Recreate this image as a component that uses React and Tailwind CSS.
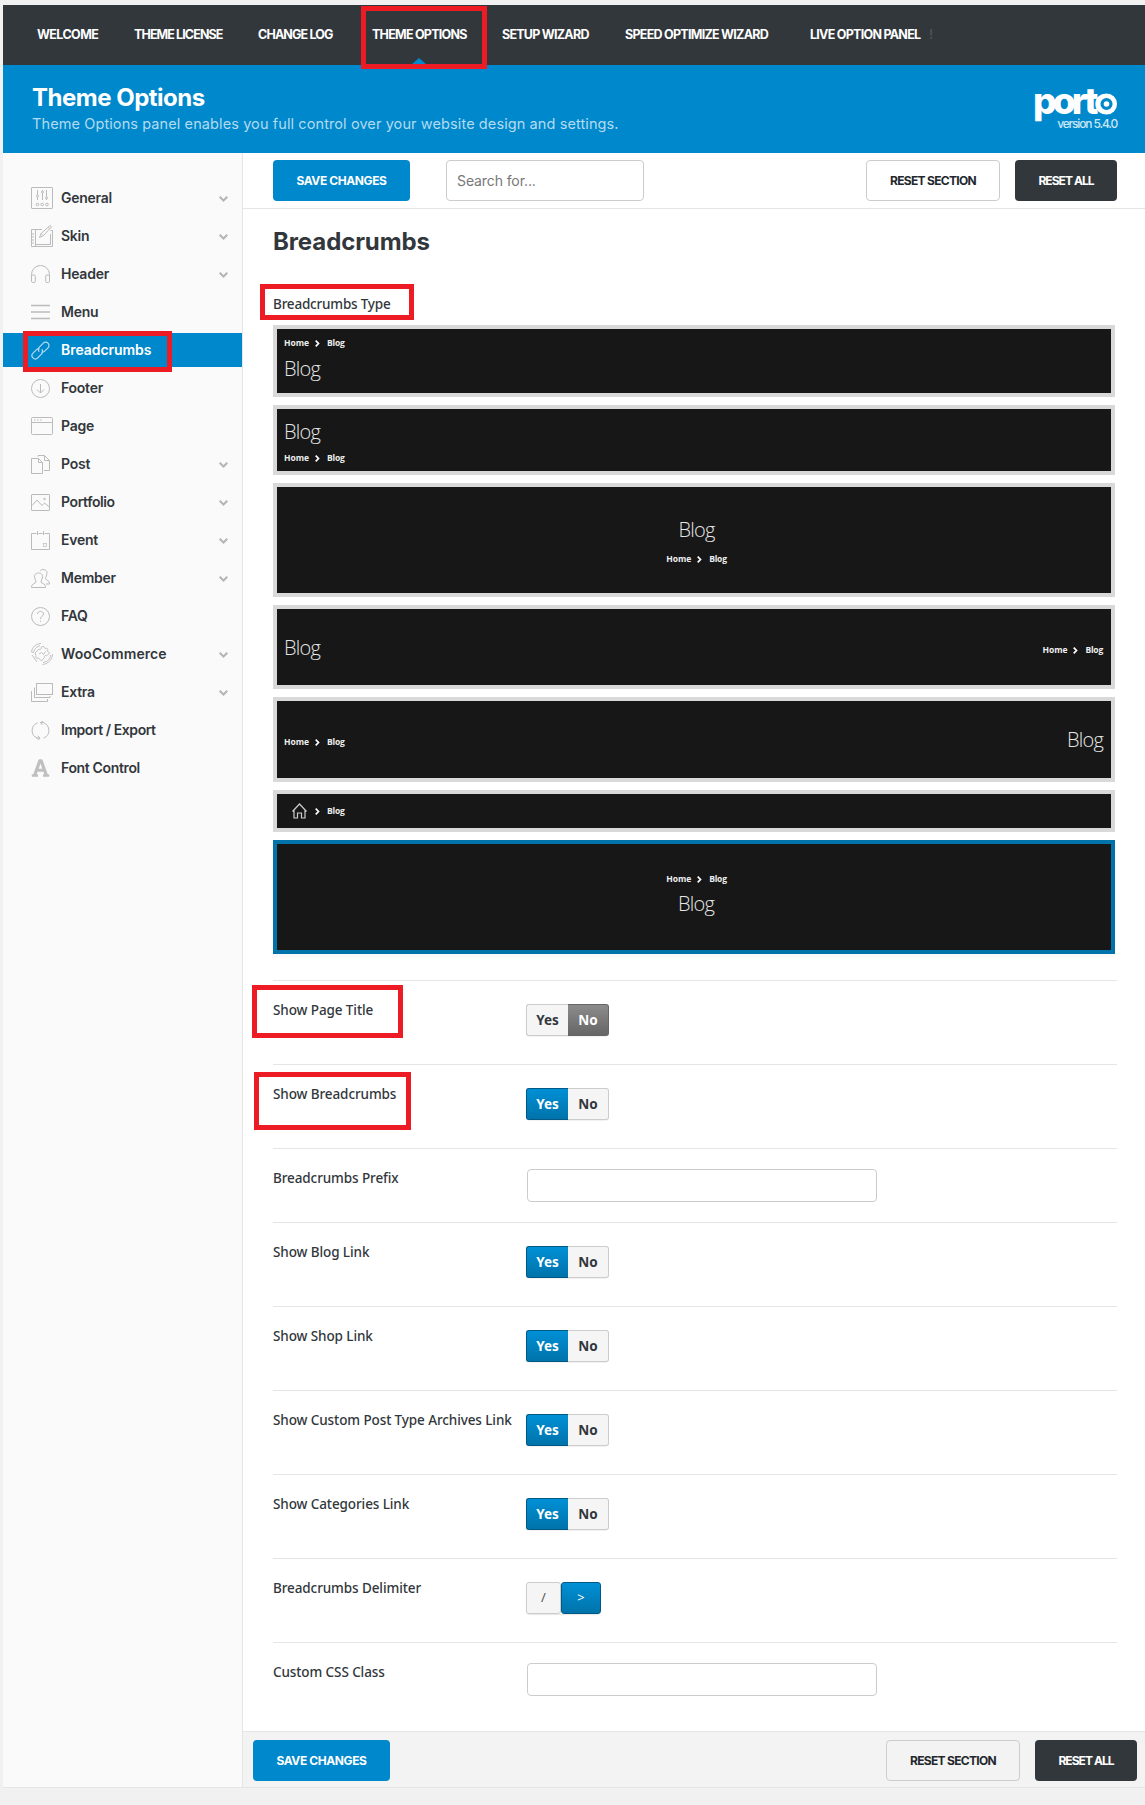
import { useState } from "react";
import { FaFont } from "react-icons/fa";
import clsx from "clsx";

const NAV = [
    { label: "WELCOME", className: "w-[62px] tracking-[-0.6px]" },
    { label: "THEME LICENSE", className: "w-[89px] tracking-[-0.9px]" },
    { label: "CHANGE LOG", className: "w-[79px] tracking-[-0.85px]" },
    { label: "THEME OPTIONS", className: "w-[95px] tracking-[-0.75px]", active: true },
    { label: "SETUP WIZARD", className: "w-[88px] tracking-[-0.75px]" },
    { label: "SPEED OPTIMIZE WIZARD", className: "w-[150px] tracking-[-0.73px]" },
    { label: "LIVE OPTION PANEL", className: "w-[112px] tracking-[-0.73px]" },
];

const ICONS = {
    general: (
        <svg width="22" height="22" viewBox="0 0 22 22">
            <rect x="0.5" y="0.5" width="21" height="21" rx="0.5" />
            <path d="M6.5 3v5M6.5 10v3M11.5 3v1M11.5 6v7M15.5 3v7M15.5 12v1" />
            <circle cx="6.5" cy="9" r="1" />
            <circle cx="11.5" cy="5" r="1" />
            <circle cx="15.5" cy="11" r="1" />
            <circle cx="6.5" cy="17.5" r="1.3" />
            <circle cx="11.2" cy="17.5" r="1.3" />
            <circle cx="16" cy="17.5" r="1.3" />
        </svg>
    ),
    skin: (
        <svg width="22" height="22" viewBox="0 0 22 22">
            <path d="M11 4.5H0.5v17h21V5.5h-2M4.5 4.5v17M1 9h2M1 12h2M1 15h2M1 18h2M5 19.5h14.5V9" />
            <path d="M8.5 12.5l1.5-4 8.5-7.5q1.5-.8 2 .8l-8 8.7zM10 8.5l2 2M17 2l2 2" />
        </svg>
    ),
    header: (
        <svg width="19" height="19" viewBox="0 0 19 19">
            <path d="M0.5 14V9.5a9 9 0 0 1 18 0V14" />
            <rect x="0.5" y="10" width="3.8" height="7.5" rx="1.2" />
            <rect x="14.7" y="10" width="3.8" height="7.5" rx="1.2" />
        </svg>
    ),
    menu: (
        <svg width="19" height="19" viewBox="0 0 19 19" className="stroke-[1.3]">
            <path d="M0 2.5h19M0 9h19M0 15.5h19" />
        </svg>
    ),
    breadcrumbs: (
        <svg width="19" height="19" viewBox="0 0 19 19" className="stroke-[1.2]">
            <path d="M8.3 10.7a3.2 3.2 0 0 1 0-4.6l4-4a3.3 3.3 0 0 1 4.7 4.7l-3.6 3.6q-1.4 1.2-3 .8M10.7 8.3a3.2 3.2 0 0 1 0 4.6l-4 4A3.3 3.3 0 0 1 2 12.2l3.6-3.6q1.4-1.2 3-.8" />
        </svg>
    ),
    footer: (
        <svg width="19" height="19" viewBox="0 0 19 19">
            <circle cx="9.5" cy="9.5" r="9" />
            <path d="M9.5 5v9M6 10.5l3.5 3.5 3.5-3.5" />
        </svg>
    ),
    page: (
        <svg width="22" height="18" viewBox="0 0 22 18">
            <rect x="0.5" y="0.5" width="21" height="17" rx="1" />
            <path d="M0.5 5.5h21M3 3h1.5M6 3h1.5M9 3h1.5" />
        </svg>
    ),
    post: (
        <svg width="19" height="19" viewBox="0 0 19 19">
            <path d="M0.5 3.5h7l4 4v11h-11zM7.5 3.5v4h4" />
            <path d="M7 1.5V.5h6.5l5 5v10H13M13.5 .5v5h5" />
        </svg>
    ),
    portfolio: (
        <svg width="19" height="17" viewBox="0 0 19 17">
            <rect x="0.5" y="0.5" width="18" height="16" rx="0.5" />
            <path d="M1 11.5l5-5.5 5 5.5 2.5-2.5 5 4" />
            <circle cx="13.5" cy="5" r="0.8" />
        </svg>
    ),
    event: (
        <svg width="19" height="19" viewBox="0 0 19 19">
            <path d="M5.5 2.5H.5v16h18v-16h-5M7.5 2.5h4M6.5 0v4M12.5 0v4" />
            <rect x="12.5" y="12.5" width="3" height="3" className="stroke-[0.7]" />
        </svg>
    ),
    member: (
        <svg width="19" height="19" viewBox="0 0 19 19">
            <path d="M7.5 4c-3.5 0-4.5 2.5-3.8 5 .3 1.6 1.3 2.7 1.3 4 0 1.5-4.5 1.5-4.5 4.5v1h14v-1c0-3-4.5-3-4.5-4.5 0-1.300 1-2.400 1.300-4C12 6.500 11 4 7.500 4z" />
            <path d="M9 2C10 .8 11 .5 12 .5c3.500 0 4.500 2.500 3.800 5-.3 1.600-1.300 2.700-1.300 4 0 1.700 4 1.500 4 5v.5H15" />
        </svg>
    ),
    faq: (
        <svg width="19" height="19" viewBox="0 0 19 19">
            <circle cx="9.5" cy="9.5" r="9" />
            <path d="M6.5 7c0-3.500 6-3.500 6 0 0 2-3 2.300-3 5M9.500 13.500v1.200" />
        </svg>
    ),
    woo: (
        <svg width="22" height="22" viewBox="0 0 22 22" className="stroke-[0.9]">
            <path d="M.5 9C1 4.500 5 .5 10 .5M2.500 9.500c.5-3 3-6 6.500-7M.5 9l2 .5M21.500 11c0 5-4 10-10 10.500M19.500 12c0 3.500-3 7-7.500 7.500M1 12l5 7" />
            <path d="M4 10l4-4c1 1 2.500.5 2-1.500l2-1.500 2 2.500c2-1 3.500.5 2.500 2.500l2 2-3 3c-1-1-2.500-.5-2 1.500l-3 3.500-3-3c-2 1-3.500-.5-2.500-2.500z" />
            <path d="M8 11l2.500-1.500 2 2 2-3" />
        </svg>
    ),
    extra: (
        <svg width="22" height="19" viewBox="0 0 22 19">
            <rect x="5.5" y="0.5" width="16" height="11" />
            <path d="M3.5 4.5v10H19V13M.5 8v10.500h16V16" />
        </svg>
    ),
    importExport: (
        <svg width="19" height="19" viewBox="0 0 19 19">
            <path d="M6.500 1.800a8.200 8.200 0 0 0 0 15.400M12.500 17.200a8.200 8.200 0 0 0 0-15.400M9.500 1.500h3.300M12 0L9.500 1.600 11.500 4M9 17H5.500M7 14.800L9 17.300 6.500 19" />
        </svg>
    ),
    font: <FaFont className="h-5 w-[19px] fill-[#bfbfbf] stroke-none" />,
};

const MENU = [
    { label: "General", icon: "general", sub: true },
    { label: "Skin", icon: "skin", sub: true },
    { label: "Header", icon: "header", sub: true },
    { label: "Menu", icon: "menu" },
    { label: "Breadcrumbs", icon: "breadcrumbs", active: true, tracking: "tracking-[-0.05px]" },
    { label: "Footer", icon: "footer" },
    { label: "Page", icon: "page" },
    { label: "Post", icon: "post", sub: true },
    { label: "Portfolio", icon: "portfolio", sub: true, tracking: "tracking-[-0.4px]" },
    { label: "Event", icon: "event", sub: true },
    { label: "Member", icon: "member", sub: true },
    { label: "FAQ", icon: "faq" },
    { label: "WooCommerce", icon: "woo", sub: true, tracking: "tracking-[0.1px]" },
    { label: "Extra", icon: "extra", sub: true },
    { label: "Import / Export", icon: "importExport", tracking: "tracking-[-0.45px]" },
    { label: "Font Control", icon: "font", tracking: "tracking-[-0.35px]" },
];

// Red frame laid over a part of the page
function Highlight({ className }) {
    return <div className={clsx("absolute border-[5px] border-[#ed1c24] pointer-events-none z-10", className)} />;
}

function TopNav() {
    return (
        <nav className="h-[60px] bg-[#32373c] flex items-center pl-[34px] gap-[35px] text-white text-[12.5px] font-bold whitespace-nowrap">
            {NAV.map((item) => (
                <a key={item.label} className={clsx("relative h-full flex items-center", item.className)}>
                    {item.label}
                    {item.active && (
                        <span className="absolute bottom-0 left-[39px] border-x-8 border-b-[7px] border-x-transparent border-b-[#0088cc]" />
                    )}
                </a>
            ))}
            <span className="-ml-[28px] text-[#4a5056]">!</span>
        </nav>
    );
}

function Header() {
    return (
        <header className="h-[88px] bg-[#0088cc] flex justify-between pl-[29px] pr-7 text-white whitespace-nowrap">
            <div className="pt-4">
                <h1 className="text-[24px] leading-[34px] font-bold tracking-[-0.5px]">Theme Options</h1>
                <p className="-mt-px text-[14.5px] leading-5 text-[#b3dbf0] tracking-[0.1px]">
                    Theme Options panel enables you full control over your website design and settings.
                </p>
            </div>
            <div className="w-[82px] pt-[19px]">
                <svg width="84" height="40" viewBox="0 0 84 40" className="block overflow-visible fill-white">
                    <text x="-2" y="30" textLength="84" lengthAdjust="spacing" className="text-[37px] font-extrabold">porto</text>
                    {/* target ring over the last letter */}
                    <circle cx="71.5" cy="20" r="8.3" strokeWidth="4.5" className="fill-[#0088cc] stroke-white" />
                    <circle cx="71.5" cy="20" r="2.8" />
                </svg>
                <div className="-mt-[8px] text-right text-[12px] leading-[16px] font-medium text-[#cce7f5] tracking-[-1.15px]">version 5.4.0</div>
            </div>
        </header>
    );
}

function Sidebar() {
    return (
        <aside className="w-[240px] bg-[#fafafa] border-r border-[#e5e5e5] pt-7 flex flex-col gap-1">
            {MENU.map((item) => (
                <a
                    key={item.label}
                    className={clsx(
                        "h-[34px] flex items-center pl-7 pr-[14px] text-[14px] font-semibold whitespace-nowrap",
                        item.tracking || "tracking-[-0.25px]",
                        item.active ? "bg-[#0088cc] text-white" : "text-[#32373c]"
                    )}
                >
                    <span className={clsx("w-[30px] shrink-0 [&>svg]:block", item.active ? "fill-none stroke-[#b3dbf0]" : "fill-none stroke-[#bbb]")}>
                        {ICONS[item.icon]}
                    </span>
                    <span className="-mt-[2px]">{item.label}</span>
                    {item.sub && (
                        <svg width="9" height="6" viewBox="0 0 9 6" className="ml-auto mt-[2px] fill-none stroke-[#b5b5b5] stroke-2">
                            <path d="M0.7 0.7l3.8 3.8 3.8-3.8" />
                        </svg>
                    )}
                </a>
            ))}
        </aside>
    );
}

function Button({ variant, className, children }) {
    return (
        <button
            className={clsx(
                "h-[41px] rounded text-[12px] font-bold whitespace-nowrap",
                variant === "primary" && "w-[137px] bg-[#0088cc] text-white tracking-[-0.4px]",
                variant === "outline" && "w-[134px] border border-[#ccc] text-[#23282d] tracking-[-0.7px]",
                variant === "dark" && "w-[102px] bg-[#32373c] text-white tracking-[-0.95px]",
                className
            )}
        >
            {children}
        </button>
    );
}

function Crumbs({ home = false, className }) {
    return (
        <div className={clsx("flex items-center text-[8.5px] leading-[10px] font-bold text-[#eee]", className)}>
            {home ? (
                <svg width="15" height="16" viewBox="0 0 15 16" className="ml-2 mr-2 fill-none stroke-[#ccc] stroke-[1.2]">
                    <path d="M0.5 8.5l7-7.5 7 7.5M2 7.5v7.5h3.5v-5h4v5H13V7.5" />
                </svg>
            ) : (
                <span className="w-[31px]">Home</span>
            )}
            <svg width="5" height="7" viewBox="0 0 5 7" className="mr-[7px] fill-none stroke-white stroke-[1.7]">
                <path d="M0.7 0.7l2.8 2.8-2.8 2.8" />
            </svg>
            <span className="tracking-[-0.2px]">Blog</span>
        </div>
    );
}

function BlogTitle({ className }) {
    return <div className={clsx("text-[20px] leading-6 font-light tracking-[-0.8px] text-[#e5e5e5]", className)}>Blog</div>;
}

function TypeOption({ selected, className, children }) {
    return (
        <div className={clsx("w-[842px] border-4 bg-[#171717] flex font-['Open_Sans',sans-serif]", selected ? "border-[#0073aa]" : "border-[#d9d9d9]", className)}>
            {children}
        </div>
    );
}

function BreadcrumbTypes() {
    return (
        <div className="flex flex-col gap-2">
            <TypeOption className="h-[72px] flex-col pl-[7px] pt-[9px]">
                <Crumbs />
                <BlogTitle className="mt-[9px]" />
            </TypeOption>
            <TypeOption className="h-[70px] flex-col pl-[7px] pt-[11px]">
                <BlogTitle />
                <Crumbs className="mt-[9px]" />
            </TypeOption>
            <TypeOption className="h-[114px] flex-col items-center pt-[31px]">
                <BlogTitle className="ml-[5px]" />
                <Crumbs className="mt-3 ml-[5px]" />
            </TypeOption>
            <TypeOption className="h-[84px] items-center justify-between pl-[7px] pr-2">
                <BlogTitle className="mt-px" />
                <Crumbs className="mt-[6px]" />
            </TypeOption>
            <TypeOption className="h-[85px] items-center justify-between pl-[7px] pr-2">
                <Crumbs className="mt-[5px]" />
                <BlogTitle />
            </TypeOption>
            <TypeOption className="h-[42px] items-center pl-[7px]">
                <Crumbs home />
            </TypeOption>
            <TypeOption selected className="h-[114px] flex-col items-center pt-[30px]">
                <Crumbs className="ml-[5px]" />
                <BlogTitle className="mt-[8px] ml-[4px]" />
            </TypeOption>
        </div>
    );
}

function Switch({ defaultValue }) {
    const [on, setOn] = useState(defaultValue);
    return (
        <div className="h-8 flex text-[13.5px] font-bold leading-[30px] text-center shadow-[0_1px_1px_rgba(0,0,0,0.06)] rounded">
            <button
                onClick={() => setOn(true)}
                className={clsx(
                    "w-[42px] rounded-l-[3px] border",
                    on ? "border-[#005885] border-r-0 bg-linear-to-b from-[#0090d6] to-[#0073aa] text-white" : "border-[#ccc] border-r-0 bg-[#f5f5f5] text-[#32373c]"
                )}
            >
                Yes
            </button>
            <button
                onClick={() => setOn(false)}
                className={clsx(
                    "w-[41px] rounded-r-[3px] border border-l-0",
                    on ? "border-[#ccc] bg-[#f5f5f5] text-[#32373c]" : "border-[#666] bg-linear-to-b from-[#8c8c8c] to-[#666] text-white"
                )}
            >
                No
            </button>
        </div>
    );
}

function Field({ label, className = "h-[84px] pt-[23px]", labelClass = "-mt-px", children }) {
    return (
        <div className={clsx("w-[844px] border-t border-[#e5e5e5] flex items-start", className)}>
            <label className={clsx("w-[253px] shrink-0 text-[13.5px] leading-[14px] text-[#32373c] font-medium tracking-[-0.1px] whitespace-nowrap", labelClass)}>{label}</label>
            {children}
        </div>
    );
}

export default function App() {
    return (
        <div className="relative w-[1145px] h-[1805px] overflow-hidden bg-[#f1f1f1] pt-[5px] pl-[3px] font-['Inter',sans-serif]">
            <TopNav />
            <Header />
            <div className="flex h-[1635px] border-b border-[#e5e5e5]">
                <Sidebar />
                <main className="flex-1 bg-white flex flex-col">
                    <div className="h-14 shrink-0 border-b border-[#e5e5e5] flex items-start pt-[7px] pl-[30px] pr-7">
                        <Button variant="primary">SAVE CHANGES</Button>
                        <input
                            placeholder="Search for..."
                            className="ml-9 w-[198px] h-[41px] border border-[#ccc] rounded px-[10px] text-[14px] tracking-[-0.1px] placeholder:text-[#777] outline-none"
                        />
                        <Button variant="outline" className="ml-auto">RESET SECTION</Button>
                        <Button variant="dark" className="ml-[15px]">RESET ALL</Button>
                    </div>

                    <div className="flex-1 pl-[30px]">
                        <h2 className="pt-[17px] text-[24px] leading-8 font-bold tracking-[-0.1px] text-[#32373c]">Breadcrumbs</h2>

                        <div className="font-['Noto_Sans',sans-serif]">
                            <div className="mt-[37px] mb-[12px] text-[13.5px] leading-[18px] font-medium tracking-[-0.2px] text-[#32373c]">Breadcrumbs Type</div>
                            <BreadcrumbTypes />
                            <div className="w-[842px] h-1 bg-[#fafafa] mb-[22px]" />

                            <Field label="Show Page Title"><Switch defaultValue={false} /></Field>
                            <Field label="Show Breadcrumbs"><Switch defaultValue /></Field>
                            <Field label="Breadcrumbs Prefix" className="h-[74px] pt-5" labelClass="mt-[2px]">
                                <input className="ml-[1px] w-[350px] h-[33px] border border-[#ccc] rounded px-2 outline-none" />
                            </Field>
                            <Field label="Show Blog Link"><Switch defaultValue /></Field>
                            <Field label="Show Shop Link"><Switch defaultValue /></Field>
                            <Field label="Show Custom Post Type Archives Link"><Switch defaultValue /></Field>
                            <Field label="Show Categories Link"><Switch defaultValue /></Field>
                            <Field label="Breadcrumbs Delimiter">
                                <div className="flex h-8 text-[13px] text-center shadow-[0_1px_1px_rgba(0,0,0,0.1)] rounded">
                                    <button className="w-[35px] rounded-[3px] border border-[#ccc] bg-[#f5f5f5] text-[#555]">/</button>
                                    <button className="w-10 rounded-[3px] border border-[#005885] bg-linear-to-b from-[#0090d6] to-[#0073aa] text-white">&gt;</button>
                                </div>
                            </Field>
                            <Field label="Custom CSS Class" className="h-[84px] pt-5" labelClass="mt-[2px]">
                                <input className="ml-[1px] w-[350px] h-[33px] border border-[#ccc] rounded px-2 outline-none" />
                            </Field>
                        </div>
                    </div>

                    <div className="h-14 shrink-0 border-t border-[#e5e5e5] bg-[#f3f3f3] flex items-start pt-2 pl-[10px] pr-2">
                        <Button variant="primary">SAVE CHANGES</Button>
                        <Button variant="outline" className="ml-auto">RESET SECTION</Button>
                        <Button variant="dark" className="ml-[15px]">RESET ALL</Button>
                    </div>
                </main>
            </div>

            <Highlight className="left-[361px] top-[6px] w-[126px] h-[63px]" />
            <Highlight className="left-[23px] top-[331px] w-[149px] h-[41px]" />
            <Highlight className="left-[260px] top-[284px] w-[154px] h-[36px]" />
            <Highlight className="left-[252px] top-[985px] w-[151px] h-[53px]" />
            <Highlight className="left-[254px] top-[1072px] w-[157px] h-[58px]" />
        </div>
    );
}
